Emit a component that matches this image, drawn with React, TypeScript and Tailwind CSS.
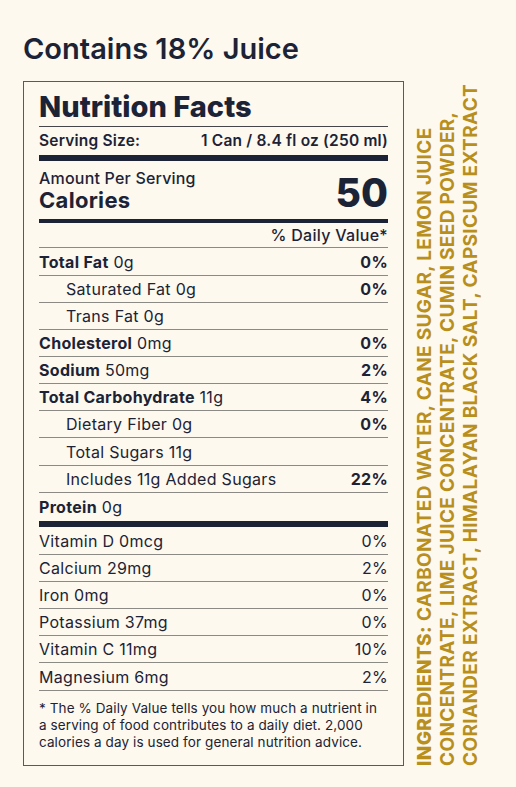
const nutrients = [
  { label: "Total Fat", amount: "0g", dv: "0%", bold: true, indent: false, h: "h-[28px]" },
  { label: "Saturated Fat 0g", amount: "", dv: "0%", bold: false, indent: true, h: "h-[27px]" },
  { label: "Trans Fat 0g", amount: "", dv: "", bold: false, indent: true, h: "h-[27px]" },
  { label: "Cholesterol", amount: "0mg", dv: "0%", bold: true, indent: false, h: "h-[27px]" },
  { label: "Sodium", amount: "50mg", dv: "2%", bold: true, indent: false, h: "h-[27px]" },
  { label: "Total Carbohydrate", amount: "11g", dv: "4%", bold: true, indent: false, h: "h-[27px]" },
  { label: "Dietary Fiber 0g", amount: "", dv: "0%", bold: false, indent: true, h: "h-[27px]" },
  { label: "Total Sugars 11g", amount: "", dv: "", bold: false, indent: true, h: "h-[28px]" },
  { label: "Includes 11g Added Sugars", amount: "", dv: "22%", bold: false, indent: true, h: "h-[27px]" },
];

const vitamins = [
  { label: "Vitamin D 0mcg", dv: "0%", h: "h-[28px]" },
  { label: "Calcium 29mg", dv: "2%", h: "h-[27px]" },
  { label: "Iron 0mg", dv: "0%", h: "h-[27px]" },
  { label: "Potassium 37mg", dv: "0%", h: "h-[27px]" },
  { label: "Vitamin C 11mg", dv: "10%", h: "h-[27px]" },
  { label: "Magnesium 6mg", dv: "2%", h: "h-[28px]" },
];

export default function App() {
  return (
    <div className="min-h-screen bg-[#fdf9ee] px-[23px] pt-[33px] font-['Inter',sans-serif] text-[#1c2336]">
      <h1 className="text-[29px] font-semibold leading-[32px]">Contains 18% Juice</h1>

      <div className="mt-[16px] flex gap-[9px]">
        {/* label */}
        <div className="w-[381px] border border-[#5c5a52] px-[15px] pt-[9px]">
          <div className="border-b border-[#45454a] pb-[3px] text-[29px] font-extrabold leading-[32px]">
            Nutrition Facts
          </div>
          <div className="flex h-[28px] items-center justify-between text-[15.5px] font-semibold tracking-[0.2px]">
            <span>Serving Size:</span>
            <span>1 Can / 8.4 fl oz (250 ml)</span>
          </div>
          <div className="h-[6px] bg-[#1c2336]" />

          <div className="flex h-[58px] items-end justify-between pb-[6px]">
            <div>
              <div className="text-[16px] font-medium leading-[18px] tracking-[0.2px]">Amount Per Serving</div>
              <div className="text-[22px] font-bold leading-[26px] tracking-[0.3px]">Calories</div>
            </div>
            <div className="text-[39px] font-extrabold leading-[40px]">50</div>
          </div>
          <div className="h-[4px] bg-[#1c2336]" />

          <div className="flex h-[25px] items-center justify-end border-b border-[#8b8a84] text-[16px] font-medium tracking-[0.3px]">
            % Daily Value*
          </div>

          {nutrients.map((n) => (
            <div
              key={n.label}
              className={`flex ${n.h} items-center justify-between border-b border-[#8b8a84] text-[16px] tracking-[0.3px]`}
            >
              <span className={n.indent ? "pl-[27px]" : ""}>
                {n.bold ? <span className="font-bold">{n.label}</span> : n.label}
                {n.amount ? " " + n.amount : ""}
              </span>
              <span className="font-bold">{n.dv}</span>
            </div>
          ))}
          <div className="flex h-[28px] items-center text-[16px] tracking-[0.3px]">
            <span>
              <span className="font-bold">Protein</span> 0g
            </span>
          </div>
          <div className="h-[6px] bg-[#1c2336]" />

          {vitamins.map((v) => (
            <div
              key={v.label}
              className={`flex ${v.h} items-center justify-between border-b border-[#8b8a84] text-[16px] tracking-[0.3px]`}
            >
              <span>{v.label}</span>
              <span>{v.dv}</span>
            </div>
          ))}

          <p className="whitespace-nowrap pb-[14px] pt-[9px] text-[13.5px] leading-[17px] tracking-[0.1px]">
            * The % Daily Value tells you how much a nutrient in
            <br />
            a serving of food contributes to a daily diet. 2,000
            <br />
            calories a day is used for general nutrition advice.
          </p>
        </div>

        {/* ingredients */}
        <div className="rotate-180 whitespace-nowrap text-[19px] font-bold uppercase leading-[23px] tracking-[0.35px] text-[#b88f1c] [writing-mode:vertical-rl]">
          <span className="font-extrabold">Ingredients:</span> Carbonated Water, Cane Sugar, Lemon Juice
          <br />
          Concentrate, Lime Juice Concentrate, Cumin Seed Powder,
          <br />
          Coriander Extract, Himalayan Black Salt, Capsicum Extract
        </div>
      </div>
    </div>
  );
}
